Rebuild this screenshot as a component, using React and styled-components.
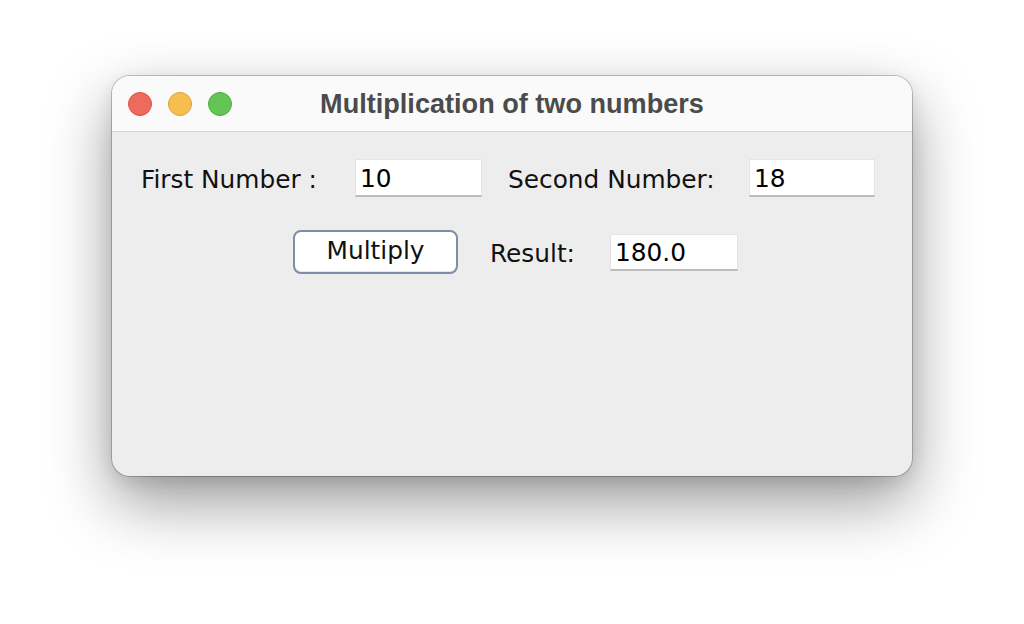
import React from "react";
import styled, { createGlobalStyle } from "styled-components";

const Global = createGlobalStyle`
  html, body { margin: 0; padding: 0; background: #ffffff; }
  #root { width: 1024px; height: 624px; overflow: hidden; }
`;

const Page = styled.div`
  width: 1024px;
  height: 624px;
  box-sizing: border-box;
  padding: 76px 0 0 112px;
  background: #ffffff;
`;

const Window = styled.div`
  width: 800px;
  height: 400px;
  border-radius: 18px;
  overflow: hidden;
  background: #ededed;
  display: flex;
  flex-direction: column;
  box-shadow: 0 0 0 1px rgba(0, 0, 0, 0.22), 0 26px 64px rgba(0, 0, 0, 0.4),
    0 6px 18px rgba(0, 0, 0, 0.1);
`;

const TitleBar = styled.div`
  height: 55px;
  flex: none;
  background: #fafafa;
  border-bottom: 1px solid #d3d3d3;
  display: grid;
  grid-template-columns: 1fr auto 1fr;
  align-items: center;
`;

const Lights = styled.div`
  display: flex;
  gap: 16px;
  padding-left: 16px;
`;

const Light = styled.span`
  width: 22px;
  height: 22px;
  border-radius: 50%;
  background: ${(p) => p.$fill};
  border: 1px solid ${(p) => p.$edge};
`;

const Title = styled.div`
  font-family: "Liberation Sans", Arial, sans-serif;
  font-weight: 700;
  font-size: 27.1px;
  color: #4b4b4b;
  line-height: 1;
`;

const Content = styled.div`
  display: flex;
  flex-direction: column;
  padding-top: 27px;
  gap: 33px;
`;

const Row = styled.div`
  display: flex;
  align-items: center;
  padding-left: ${(p) => p.$left}px;
`;

const Label = styled.span`
  width: ${(p) => p.$w}px;
  flex: none;
  font-family: "DejaVu Sans", "Lucida Grande", sans-serif;
  font-size: 24.8px;
  color: #111111;
  white-space: nowrap;
  padding-top: 2px;
`;

const Field = styled.div`
  box-sizing: border-box;
  width: ${(p) => p.$w}px;
  height: ${(p) => p.$h}px;
  flex: none;
  margin-right: ${(p) => p.$mr || 0}px;
  background: #ffffff;
  border: 1px solid #e4e4e4;
  border-bottom: 2px solid #bdbdbd;
  padding: 2px 0 0 4px;
  display: flex;
  align-items: center;
  font-family: "DejaVu Sans", "Lucida Grande", sans-serif;
  font-size: 24.8px;
  color: #000000;
`;

const Button = styled.button`
  box-sizing: border-box;
  width: 165px;
  height: 44px;
  flex: none;
  margin-right: 32px;
  background: #ffffff;
  border: 2px solid #7f8ea6;
  border-radius: 8px;
  font-family: "DejaVu Sans", "Lucida Grande", sans-serif;
  font-size: 24.8px;
  color: #111111;
  padding: 0 0 3px;
  box-shadow: inset 0 -1px 0 #e6e6e6;
`;

export default function App() {
  return (
    <>
      <Global />
      <Page>
        <Window>
          <TitleBar>
            <Lights>
              <Light $fill="#ee6a5f" $edge="#d3554b" />
              <Light $fill="#f5be4f" $edge="#d8a13f" />
              <Light $fill="#62c554" $edge="#50a942" />
            </Lights>
            <Title>Multiplication of two numbers</Title>
            <span />
          </TitleBar>
          <Content>
            <Row $left={29}>
              <Label $w={214}>First Number :</Label>
              <Field $w={127} $h={38} $mr={26}>10</Field>
              <Label $w={241}>Second Number:</Label>
              <Field $w={126} $h={38}>18</Field>
            </Row>
            <Row $left={181}>
              <Button>Multiply</Button>
              <Label $w={120}>Result:</Label>
              <Field $w={128} $h={37}>180.0</Field>
            </Row>
          </Content>
        </Window>
      </Page>
    </>
  );
}
